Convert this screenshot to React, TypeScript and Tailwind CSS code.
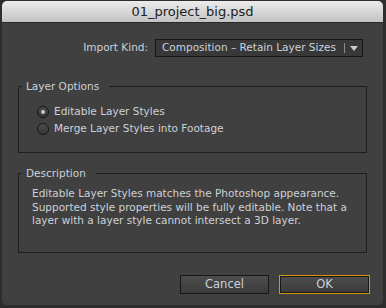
import React from "react";

const font = { fontFamily: '"DejaVu Sans", "Lucida Grande", sans-serif' };

function Radio({ checked, label }: { checked?: boolean; label: string }) {
  return (
    <div className="flex h-[17px] items-center">
      <span className="flex h-[12px] w-[12px] items-center justify-center rounded-full border border-[#151515] bg-gradient-to-b from-[#4c4c4c] to-[#363636]">
        {checked && <span className="h-[4px] w-[4px] rounded-full bg-[#c8ccd4]" />}
      </span>
      <span className="ml-[5px] text-[10.5px] text-[#cdd1d8]">{label}</span>
    </div>
  );
}

function Group({ title, className, children }: { title: string; className: string; children: React.ReactNode }) {
  return (
    <fieldset className={`mx-[16px] border border-[#1e1e1e] ${className}`}>
      <legend className="ml-[3px] pl-[4px] pr-[10px] text-[10.5px] leading-[14px] text-[#cdd1d8]">{title}</legend>
      {children}
    </fieldset>
  );
}

export default function App(): JSX.Element {
  return (
    <div className="h-[308px] w-[386px] bg-[#2d2d2d] pl-[2px] pr-[3px] pt-[1px] pb-[3px]" style={font}>
      <div className="flex h-full flex-col overflow-hidden rounded-[5px] bg-[#404040]">
        <div className="flex h-[22px] shrink-0 items-center justify-center border-b border-[#2a2a2a] bg-gradient-to-b from-[#ececec] to-[#c3c3c3] text-[13px] text-[#202020]">
          01_project_big.psd
        </div>

        <div className="mt-[16px] flex items-center justify-end gap-[7px] pr-[20px]">
          <span className="text-[10.5px] text-[#cdd1d8]">Import Kind:</span>
          <div className="flex h-[18px] w-[208px] items-center border border-[#171717] bg-[#383838] text-[10.5px] text-[#cdd1d8]">
            <span className="flex-1 pl-[6px]">Composition – Retain Layer Sizes</span>
            <span className="h-[10px] w-px bg-[#8a8a8a]" />
            <span className="flex w-[17px] justify-center">
              <svg width="8" height="5" viewBox="0 0 8 5">
                <path d="M0 0h8L4 5z" fill="#c6cbd4" />
              </svg>
            </span>
          </div>
        </div>

        <Group title="Layer Options" className="mt-[22px] h-[74px] pt-[10px]">
          <div className="pl-[18px]">
            <Radio checked label="Editable Layer Styles" />
            <Radio label="Merge Layer Styles into Footage" />
          </div>
        </Group>

        <Group title="Description" className="mt-[13px] h-[87px] pt-[7px]">
          <p className="pl-[13px] pr-[8px] text-[10.5px] leading-[13.5px] text-[#cdd1d8]">
            Editable Layer Styles matches the Photoshop appearance. Supported style properties will be fully editable. Note that a layer with a layer style cannot intersect a 3D layer.
          </p>
        </Group>

        <div className="mt-[22px] flex justify-end gap-[10px] pr-[13px]">
          <button className="h-[19px] w-[89px] border border-[#171717] bg-gradient-to-b from-[#4d4d4d] to-[#3b3b3b] text-[11.5px] text-[#cdd1d8]">
            Cancel
          </button>
          <button className="h-[19px] w-[91px] border border-[#d8960f] bg-gradient-to-b from-[#4d4d4d] to-[#3b3b3b] text-[11.5px] text-[#cdd1d8] shadow-[inset_0_0_0_1px_#171717]">
            OK
          </button>
        </div>
      </div>
    </div>
  );
}
